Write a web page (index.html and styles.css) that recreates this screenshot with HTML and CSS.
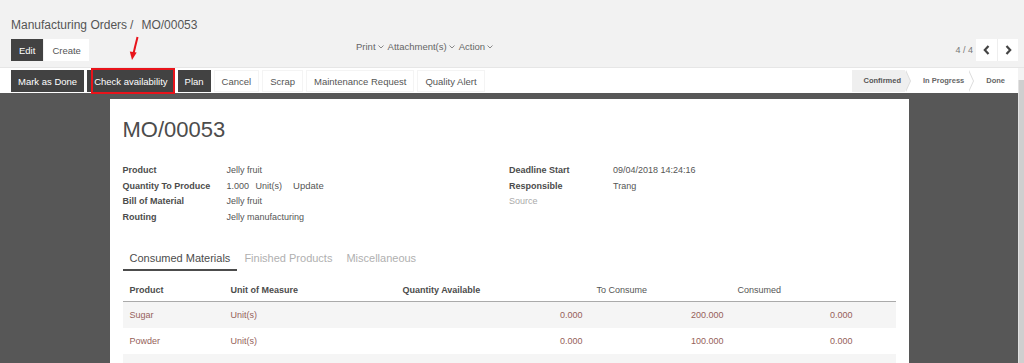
FILE: index.html
```html
<!DOCTYPE html>
<html>
<head>
  <title>MO/00053 - Manufacturing Orders</title>
  <link rel="stylesheet" href="styles.css">
</head>
<body>
  <div class="control-panel">
    <ol class="breadcrumb">
      <li><a href="#">Manufacturing Orders</a></li>
      <li class="active">MO/00053</li>
    </ol>
    <div class="cp-row">
      <div class="cp-buttons">
        <button class="btn btn-dark">Edit</button>
        <button class="btn btn-light">Create</button>
      </div>
      <div class="cp-sidebar">
        <span class="dropdown">Print<svg width="6" height="4" viewBox="0 0 6 4"><polyline points="0.5,0.5 3,3 5.5,0.5"/></svg></span>
        <span class="dropdown">Attachment(s)<svg width="6" height="4" viewBox="0 0 6 4"><polyline points="0.5,0.5 3,3 5.5,0.5"/></svg></span>
        <span class="dropdown">Action<svg width="6" height="4" viewBox="0 0 6 4"><polyline points="0.5,0.5 3,3 5.5,0.5"/></svg></span>
      </div>
      <div class="cp-pager">
        <span class="pager-value">4 / 4</span>
        <div class="pager-buttons">
          <button class="pager-btn"><svg width="7" height="10" viewBox="0 0 7 10"><polyline points="5.5,1 1.8,5 5.5,9"/></svg></button>
          <button class="pager-btn"><svg width="7" height="10" viewBox="0 0 7 10"><polyline points="1.5,1 5.2,5 1.5,9"/></svg></button>
        </div>
      </div>
    </div>
  </div>

  <div class="view">
    <div class="view-main">
      <div class="statusbar">
        <div class="status-buttons">
          <button class="btn btn-dark">Mark as Done</button>
          <button class="btn btn-dark">Check availability</button>
          <button class="btn btn-dark">Plan</button>
          <button class="btn btn-outline">Cancel</button>
          <button class="btn btn-outline">Scrap</button>
          <button class="btn btn-outline">Maintenance Request</button>
          <button class="btn btn-outline">Quality Alert</button>
        </div>
        <div class="status-steps">
          <span class="step step-current">Confirmed</span>
          <span class="step">In Progress</span>
          <span class="step">Done</span>
        </div>
      </div>

      <div class="sheet-bg">
        <div class="sheet">
          <h1 class="title">MO/00053</h1>

          <div class="fields">
            <div class="group">
              <span class="label">Product</span>
              <span class="value">Jelly fruit</span>
              <span class="label">Quantity To Produce</span>
              <span class="value"><span class="qty">1.000</span>Unit(s)<span class="update">Update</span></span>
              <span class="label">Bill of Material</span>
              <span class="value">Jelly fruit</span>
              <span class="label">Routing</span>
              <span class="value">Jelly manufacturing</span>
            </div>
            <div class="group">
              <span class="label">Deadline Start</span>
              <span class="value">09/04/2018 14:24:16</span>
              <span class="label">Responsible</span>
              <span class="value">Trang</span>
              <span class="label label-muted">Source</span>
              <span class="value"></span>
            </div>
          </div>

          <div class="tabs">
            <span class="tab tab-active">Consumed Materials</span>
            <span class="tab">Finished Products</span>
            <span class="tab">Miscellaneous</span>
          </div>

          <table class="lines">
            <colgroup>
              <col class="c-product">
              <col class="c-uom">
              <col class="c-avail">
              <col class="c-consume">
              <col class="c-consumed">
              <col class="c-extra">
            </colgroup>
            <thead>
              <tr>
                <th>Product</th>
                <th>Unit of Measure</th>
                <th>Quantity Available</th>
                <th class="th-light">To Consume</th>
                <th class="th-light">Consumed</th>
                <th></th>
              </tr>
            </thead>
            <tbody>
              <tr>
                <td>Sugar</td>
                <td>Unit(s)</td>
                <td class="num">0.000</td>
                <td class="num">200.000</td>
                <td class="num">0.000</td>
                <td></td>
              </tr>
              <tr>
                <td>Powder</td>
                <td>Unit(s)</td>
                <td class="num">0.000</td>
                <td class="num">100.000</td>
                <td class="num">0.000</td>
                <td></td>
              </tr>
              <tr>
                <td></td><td></td><td></td><td></td><td></td><td></td>
              </tr>
            </tbody>
          </table>
        </div>
      </div>
    </div>
    <div class="scrollbar"><div class="scroll-thumb"></div></div>
  </div>

  <div class="note-box"></div>
  <svg class="note-arrow" width="12" height="26" viewBox="0 0 12 26">
    <line x1="9.5" y1="1" x2="5.6" y2="17"/>
    <polygon points="8.7,16.6 1.8,15.5 4,24"/>
  </svg>
</body>
</html>
```

FILE: styles.css
```css
* { box-sizing: border-box; }
body { margin: 0; height: 363px; overflow: hidden; position: relative; font-family: "Liberation Sans", Arial, sans-serif; color: #4c4c4c; background: #575757; }
button { font-family: inherit; cursor: pointer; }

/* control panel */
.control-panel { background: #f2f2f2; height: 68px; padding: 17px 6px 0 11px; border-bottom: 1px solid #e6e6e6; }
.breadcrumb { list-style: none; margin: 0; padding: 0; display: flex; font-size: 12px; line-height: 16px; color: #555; }
.breadcrumb li + li::before { content: "/"; padding: 0 8px 0 3px; }
.breadcrumb a { color: #555; text-decoration: none; }

.cp-row { display: flex; margin-top: 6px; height: 22px; }
.cp-buttons { width: 345px; display: flex; gap: 1px; }
.btn { height: 22px; border: none; padding: 0 8px; font-size: 9.5px; }
.btn-dark { background: #424242; color: #fff; }
.btn-light { background: #fff; color: #555; }
.btn-outline { background: #fff; color: #555; border: 1px solid #f4f4f4; }

.cp-sidebar { flex: 1; display: flex; gap: 4px; font-size: 9.5px; line-height: 15px; color: #666; }
.dropdown svg { margin-left: 2px; vertical-align: 1px; fill: none; stroke: #888; stroke-width: 1; }

.cp-pager { display: flex; align-items: center; gap: 3px; }
.pager-value { font-size: 9px; color: #777; }
.pager-buttons { display: flex; }
.pager-btn { width: 21px; height: 22px; padding: 0; background: #fff; border: none; display: flex; align-items: center; justify-content: center; }
.pager-btn + .pager-btn { border-left: 1px solid #eee; }
.pager-btn svg { fill: none; stroke: #444; stroke-width: 2.2; }

/* form view */
.view { display: flex; height: 295px; }
.view-main { flex: 1; display: flex; flex-direction: column; min-width: 0; }
.scrollbar { width: 6px; background: #f3f3f3; padding-top: 12px; }
.scroll-thumb { height: 100%; background: #cfcfcf; border-left: 1px solid #e2e2e2; }

.statusbar { height: 25px; padding: 2px 0 1px 11px; display: flex; justify-content: space-between; background: #fff; }
.status-buttons { display: flex; gap: 3px; }
.status-buttons .btn { padding: 0 7px; }

.status-steps { display: flex; }
.step { position: relative; height: 22px; line-height: 22px; font-size: 7.5px; font-weight: bold; color: #666; background: #fff; padding: 0 4px 0 18px; }
.step:first-child { padding-left: 11px; }
.step:last-child { padding-right: 13px; }
.step-current { background: #efefef; color: #555; }
.step:not(:last-child)::before,
.step:not(:last-child)::after { content: ""; position: absolute; top: 0; left: 100%; border-top: 11px solid transparent; border-bottom: 11px solid transparent; border-left: 5px solid #fff; }
.step:not(:last-child)::before { border-left-color: #dcdcdc; margin-left: 1px; z-index: 1; }
.step:not(:last-child)::after { z-index: 2; }
.step-current::after { border-left-color: #efefef !important; }

.sheet-bg { flex: 1; overflow: hidden; padding-top: 6px; }
.sheet { width: 799px; margin: 0 auto; min-height: 300px; background: #fff; padding: 18px 13px 0; }
.title { margin: 0 0 19px; font-size: 22px; line-height: 26px; font-weight: normal; color: #4c4c4c; }

.fields { display: grid; grid-template-columns: 1fr 1fr; }
.group { display: grid; grid-template-columns: 104px 1fr; grid-auto-rows: 15.7px; align-items: center; font-size: 9px; }
.label { font-weight: bold; color: #4c4c4c; }
.label-muted { font-weight: normal; color: #aaa; }
.value { color: #555; }
.qty { margin-right: 6.5px; }
.update { margin-left: 11px; font-size: 9.5px; }

.tabs { display: flex; margin-top: 21.2px; }
.tab { padding: 5px 7px 4px; line-height: 14px; font-size: 11px; color: #b0b0b0; border-bottom: 2px solid transparent; }
.tab-active { color: #4c4c4c; border-bottom-color: #4c4c4c; }

.lines { width: 773px; margin-top: 8px; table-layout: fixed; border-collapse: collapse; font-size: 9px; }
.c-product { width: 101px; }
.c-uom { width: 172px; }
.c-avail { width: 194px; }
.c-consume { width: 141px; }
.c-consumed { width: 129px; }
.c-extra { width: 36px; }
.lines th { height: 23px; padding: 0 7px; text-align: left; font-weight: bold; color: #4c4c4c; border-bottom: 1px solid #aaa; }
.lines th.th-light { font-weight: normal; color: #555; }
.lines td { height: 26px; padding: 0 7px; color: #955f5a; }
.lines td.num { text-align: right; }
.lines tbody tr:nth-child(odd) { background: #f5f5f5; }

/* annotation */
.note-box { position: absolute; left: 91px; top: 68px; width: 84px; height: 26px; border: 2px solid #e8141b; }
.note-arrow { position: absolute; left: 128px; top: 36px; }
.note-arrow line { stroke: #e8141b; stroke-width: 2; }
.note-arrow polygon { fill: #e8141b; }
```
